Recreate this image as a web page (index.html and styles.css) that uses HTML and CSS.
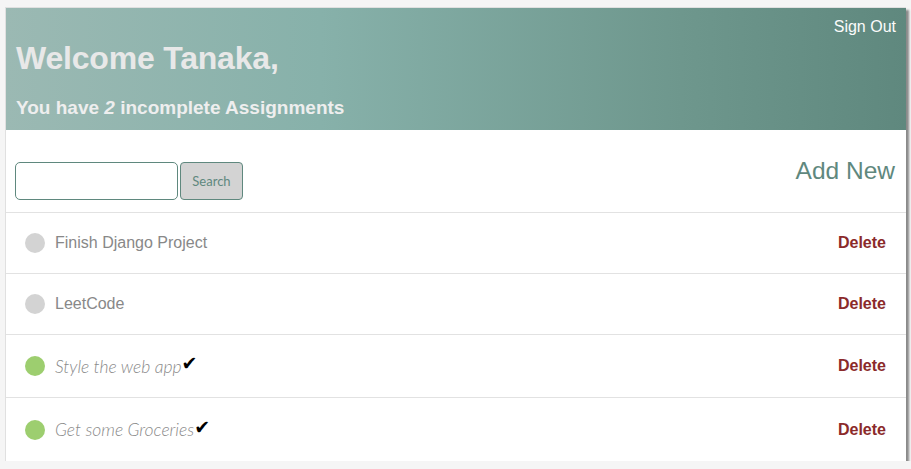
FILE: index.html
```html
<!DOCTYPE html>
<html>
<head>
<meta charset="utf-8">
<link rel="stylesheet" href="styles.css">
</head>
<body>
<div class="page">
  <div class="card">
    <header class="header">
      <div class="header-top"><a class="signout">Sign Out</a></div>
      <h1 class="welcome">Welcome Tanaka,</h1>
      <h3 class="count">You have <i>2</i> incomplete Assignments</h3>
    </header>
    <div class="toolbar">
      <form class="search">
        <input class="search-input" type="text">
        <button class="search-btn" type="button">Search</button>
      </form>
      <a class="add-new">Add New</a>
    </div>
    <div class="list">
      <div class="row">
        <div class="title"><span class="dot dot-todo"></span><span class="text">Finish Django Project</span></div>
        <a class="delete">Delete</a>
      </div>
      <div class="row">
        <div class="title"><span class="dot dot-todo"></span><span class="text">LeetCode</span></div>
        <a class="delete">Delete</a>
      </div>
      <div class="row row-done">
        <div class="title"><span class="dot dot-done"></span><span class="text done">Style the web app</span><span class="check">✔</span></div>
        <a class="delete">Delete</a>
      </div>
      <div class="row row-done">
        <div class="title"><span class="dot dot-done"></span><span class="text done">Get some Groceries</span><span class="check">✔</span></div>
        <a class="delete">Delete</a>
      </div>
    </div>
  </div>
</div>
</body>
</html>
```
FILE: styles.css
```css
html, body {
  margin: 0;
  padding: 0;
  background: #f5f5f5;
  font-family: "Liberation Sans", Arial, sans-serif;
}
.page {
  padding: 7px 5px 0 5px;
}
.card {
  width: 901px;
  background: #fff;
  box-shadow: 3px 3px 2px #8a8a8a;
  border-top: 1px solid #e0e0e0;
  border-left: 1px solid #e0e0e0;
  box-sizing: border-box;
}
.header {
  height: 122px;
  box-sizing: border-box;
  padding: 10px 10px 0 10px;
  background: linear-gradient(to right, #9bb9b3 0%, #87b1aa 35%, #6e978d 75%, #5f887e 100%);
  color: #ececec;
}
.header-top {
  display: flex;
  justify-content: flex-end;
}
.signout {
  font-size: 16px;
  color: #fbfbfb;
  line-height: 18px;
}
.welcome {
  margin: 3px 0 0 0;
  font-size: 32px;
  line-height: 38px;
  font-weight: bold;
  color: #e8e8e8;
  letter-spacing: -0.2px;
}
.count {
  margin: 20px 0 0 0;
  font-size: 19px;
  line-height: 22px;
  font-weight: bold;
  color: #eeeeee;
}
.toolbar {
  display: flex;
  justify-content: space-between;
  align-items: flex-start;
  padding: 32px 11px 12px 9px;
  border-bottom: 1px solid #e2e2e2;
}
.search {
  display: flex;
  gap: 2px;
  margin: 0;
}
.search-input {
  width: 163px;
  height: 38px;
  box-sizing: border-box;
  border: 1px solid #5f887e;
  border-radius: 5px;
  margin: 0;
}
.search-btn {
  width: 63px;
  height: 38px;
  box-sizing: border-box;
  background: #d3d3d3;
  border: 1px solid #5f887e;
  border-radius: 4px;
  color: #5f887e;
  font-family: "Lato", sans-serif;
  font-size: 13px;
  margin: 0;
}
.add-new {
  font-size: 24.5px;
  color: #5f887e;
  margin-top: -5px;
}
.row {
  display: flex;
  justify-content: space-between;
  align-items: center;
  height: 60px;
  padding: 0 20px 0 19px;
  border-bottom: 1px solid #e2e2e2;
}
.row-done {
  height: 62px;
}
.row:last-child {
  border-bottom: none;
  height: 63px;
}
.title {
  display: flex;
  align-items: center;
}
.dot {
  width: 20px;
  height: 20px;
  border-radius: 50%;
  margin-right: 10px;
}
.dot-todo { background: #d3d3d3; }
.dot-done { background: #9dce6f; }
.text {
  font-size: 16px;
  color: #888888;
}
.text.done {
  font-family: "Lato", sans-serif;
  font-style: italic;
  font-weight: 300;
  font-size: 17.5px;
  color: #8a8a8a;
}
.check {
  font-family: "DejaVu Sans", sans-serif;
  font-size: 19px;
  line-height: 18px;
  color: #000;
  position: relative;
  top: -3px;
}
.delete {
  font-weight: bold;
  font-size: 16px;
  color: #8b2a2a;
}
```
